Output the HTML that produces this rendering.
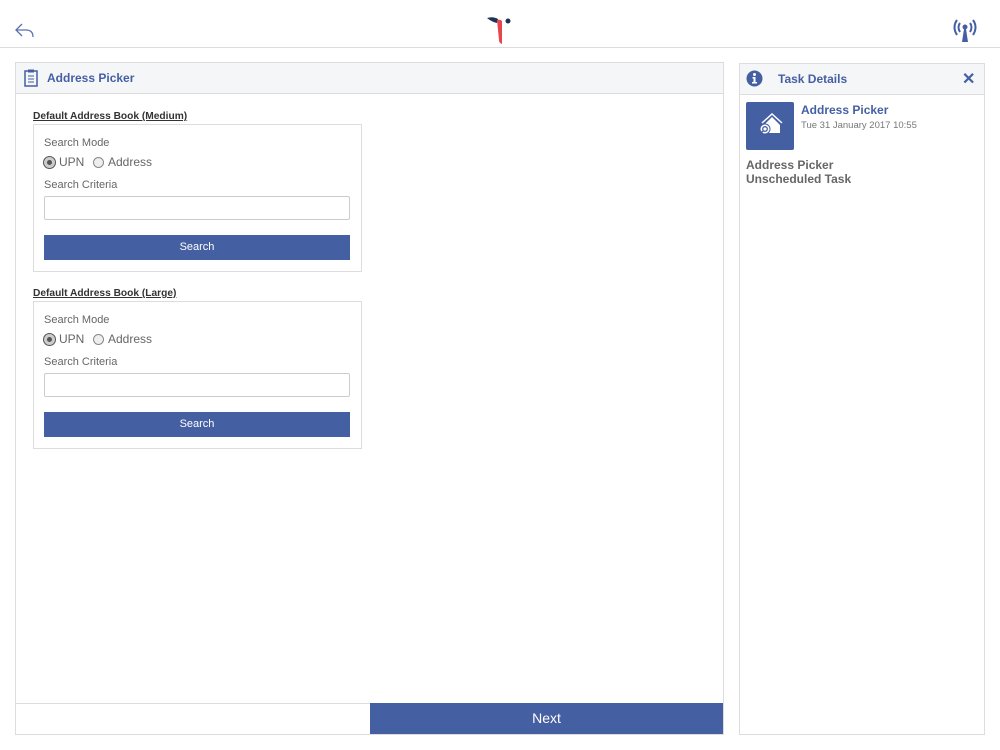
<!DOCTYPE html><html><head><style>
*{margin:0;padding:0;box-sizing:border-box}
body{width:1000px;height:750px;background:#fff;font-family:"Liberation Sans",sans-serif;position:relative;overflow:hidden}
.a{position:absolute}
.lbl{font-size:11px;color:#666}
.btn{background:#455fa3;color:#fff;font-size:11px;text-align:center;line-height:25px}
.inp{border:1px solid #ccc;border-radius:2px;background:#fff}
.rad{width:11px;height:11px;border-radius:50%;border:1px solid #888;background:#eee}
</style></head><body>
<div class="a" style="left:0;top:47px;width:1000px;height:1px;background:#dcdcdc"></div>
<svg class="a" style="left:14px;top:21px" width="22" height="18" viewBox="0 0 22 18"><path d="M8 3 L2 9 L8 15 M2 9 H12 Q19 9 19 16" fill="none" stroke="#5a72b0" stroke-width="1.3"/></svg>
<svg class="a" style="left:486px;top:16px" width="28" height="30" viewBox="0 0 28 30"><path d="M1 2 Q7 0 12 3 L11 7 Q6 6 1 2Z" fill="#1b3654"/><path d="M11 4 Q14 3 16 5 L16 28 Q13 27 13 24Z" fill="#e5464d"/><circle cx="22" cy="5" r="2.5" fill="#1b3654"/></svg>
<svg class="a" style="left:952px;top:17px" width="26" height="26" viewBox="0 0 26 26"><g fill="none" stroke="#455fa3" stroke-width="2"><path d="M8 6 Q5 10 8 15"/><path d="M18 6 Q21 10 18 15"/><path d="M5 3 Q0 10 5 18"/><path d="M21 3 Q26 10 21 18"/></g><circle cx="13" cy="10" r="2.5" fill="#455fa3"/><path d="M12 12 L10 25 H16 L14 12Z" fill="#455fa3"/></svg>

<div class="a" style="left:15px;top:62px;width:709px;height:673px;border:1px solid #ddd"></div>
<div class="a" style="left:16px;top:63px;width:707px;height:31px;background:#f5f6f8;border-bottom:1px solid #ddd"></div>
<svg class="a" style="left:24px;top:69px" width="14" height="18" viewBox="0 0 14 18"><rect x="1" y="2" width="12" height="15" fill="none" stroke="#455fa3" stroke-width="1.5"/><rect x="4" y="0.5" width="6" height="3" fill="#455fa3"/><g stroke="#455fa3"><path d="M4 7H10M4 10H10M4 13H10"/></g></svg>
<div class="a" style="left:47px;top:71px;font-size:12px;font-weight:bold;color:#455fa3">Address Picker</div>

<div class="a" style="left:33px;top:111px;font-size:10.2px;font-weight:bold;color:#333;text-decoration:underline">Default Address Book (Medium)</div>
<div class="a" style="left:33px;top:124px;width:329px;height:148px;border:1px solid #ddd"></div>
<div class="a lbl" style="left:44px;top:137px">Search Mode</div>
<div class="a rad" style="left:44px;top:157px;background:#555;border:3px solid #ccc;box-shadow:0 0 0 1px #555"></div>
<div class="a" style="left:59px;top:155px;font-size:12px;color:#666">UPN</div>
<div class="a rad" style="left:93px;top:157px"></div>
<div class="a" style="left:108px;top:155px;font-size:12px;color:#666">Address</div>
<div class="a lbl" style="left:44px;top:179px">Search Criteria</div>
<div class="a inp" style="left:44px;top:196px;width:306px;height:24px"></div>
<div class="a btn" style="left:44px;top:235px;width:306px;height:25px">Search</div>

<div class="a" style="left:33px;top:288px;font-size:10.2px;font-weight:bold;color:#333;text-decoration:underline">Default Address Book (Large)</div>
<div class="a" style="left:33px;top:301px;width:329px;height:148px;border:1px solid #ddd"></div>
<div class="a lbl" style="left:44px;top:314px">Search Mode</div>
<div class="a rad" style="left:44px;top:334px;background:#555;border:3px solid #ccc;box-shadow:0 0 0 1px #555"></div>
<div class="a" style="left:59px;top:332px;font-size:12px;color:#666">UPN</div>
<div class="a rad" style="left:93px;top:334px"></div>
<div class="a" style="left:108px;top:332px;font-size:12px;color:#666">Address</div>
<div class="a lbl" style="left:44px;top:356px">Search Criteria</div>
<div class="a inp" style="left:44px;top:373px;width:306px;height:24px"></div>
<div class="a btn" style="left:44px;top:412px;width:306px;height:25px">Search</div>

<div class="a" style="left:16px;top:703px;width:354px;height:1px;background:#ddd"></div>
<div class="a btn" style="left:370px;top:703px;width:353px;height:31px;line-height:31px;font-size:14px">Next</div>

<div class="a" style="left:739px;top:63px;width:246px;height:672px;border:1px solid #ddd"></div>
<div class="a" style="left:740px;top:64px;width:244px;height:31px;background:#f5f6f8;border-bottom:1px solid #ddd"></div>
<svg class="a" style="left:746px;top:70px" width="17" height="17" viewBox="0 0 17 17"><circle cx="8.5" cy="8.5" r="8" fill="#455fa3"/><circle cx="8.5" cy="4.5" r="1.5" fill="#fff"/><path d="M6.5 7H9.5V12H11V13.5H6V12H7.5V8.5H6.5Z" fill="#fff"/></svg>
<div class="a" style="left:778px;top:72px;font-size:12px;font-weight:bold;color:#455fa3">Task Details</div>
<div class="a" style="left:962px;top:69px;font-size:16px;font-weight:bold;color:#455fa3">✕</div>
<div class="a" style="left:746px;top:102px;width:48px;height:48px;background:#455fa3;border-radius:2px"></div>
<svg class="a" style="left:756px;top:112px" width="28" height="26" viewBox="0 0 28 26"><path d="M8 13 L16 5 L24 13 V21 H12" fill="#fff"/><path d="M6 11 L16 2 L26 11" fill="none" stroke="#fff" stroke-width="1.5"/><circle cx="9" cy="17" r="5" fill="#fff" stroke="#455fa3" stroke-width="1"/><circle cx="9" cy="17" r="2.3" fill="none" stroke="#455fa3" stroke-width="1.3"/><path d="M4 22 L7 19" stroke="#455fa3" stroke-width="1.5"/></svg>
<div class="a" style="left:801px;top:103px;font-size:12px;font-weight:bold;color:#455fa3">Address Picker</div>
<div class="a" style="left:801px;top:120px;font-size:9.5px;color:#777">Tue 31 January 2017 10:55</div>
<div class="a" style="left:746px;top:158px;font-size:12px;font-weight:bold;color:#666;line-height:14px">Address Picker<br>Unscheduled Task</div>
</body></html>
